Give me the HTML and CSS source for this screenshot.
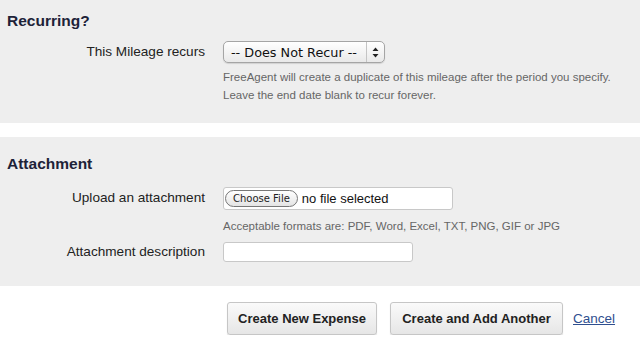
FILE: index.html
```html
<!DOCTYPE html>
<html>
<head>
<meta charset="utf-8">
<link rel="stylesheet" href="styles.css">
</head>
<body>
<section class="panel panel-recur">
  <h2 class="panel-title">Recurring?</h2>
  <div class="row">
    <label class="row-label">This Mileage recurs</label>
    <div class="row-field">
      <div class="select">
        <span class="select-text">-- Does Not Recur --</span>
        <span class="select-arrows">
          <svg width="7" height="11" viewBox="0 0 7 11"><path d="M3.5 0.5 L6.5 4 L0.5 4 Z M3.5 10.5 L6.5 7 L0.5 7 Z" fill="#222"/></svg>
        </span>
      </div>
      <p class="help help-recur">FreeAgent will create a duplicate of this mileage after the period you specify.<br>Leave the end date blank to recur forever.</p>
    </div>
  </div>
</section>
<section class="panel panel-attach">
  <h2 class="panel-title panel-title-attach">Attachment</h2>
  <div class="row">
    <label class="row-label">Upload an attachment</label>
    <div class="row-field">
      <div class="file-input">
        <span class="file-button">Choose File</span>
        <span class="file-name">no file selected</span>
      </div>
      <p class="help help-attach">Acceptable formats are: PDF, Word, Excel, TXT, PNG, GIF or JPG</p>
    </div>
  </div>
  <div class="row">
    <label class="row-label row-label-desc">Attachment description</label>
    <div class="row-field">
      <div class="text-input"></div>
    </div>
  </div>
</section>
<div class="actions">
  <button class="btn btn-create">Create New Expense</button>
  <button class="btn btn-another">Create and Add Another</button>
  <a class="cancel" href="#">Cancel</a>
</div>
</body>
</html>
```

FILE: styles.css
```css
html, body {
  margin: 0;
  padding: 0;
  background: #ffffff;
  font-family: "Liberation Sans", Arial, sans-serif;
  color: #222222;
}

.panel {
  background: #eeeeee;
  padding: 0 7px;
}

.panel-recur {
  padding-top: 11px;
  padding-bottom: 19px;
}

.panel-attach {
  margin-top: 14px;
  padding-top: 17px;
  padding-bottom: 24px;
}

.panel-title {
  margin: 0 0 10px 0;
  font-size: 15.5px;
  line-height: 20px;
  font-weight: bold;
  color: #1d2238;
}

.panel-title-attach {
  margin-bottom: 13px;
}

.row {
  display: grid;
  grid-template-columns: 198px 1fr;
  column-gap: 18px;
}

.row-label {
  text-align: right;
  font-size: 13.6px;
  line-height: 22px;
  color: #222222;
}

.row-field {
  display: flex;
  flex-direction: column;
  align-items: flex-start;
}

.select {
  width: 160px;
  height: 20px;
  border: 1px solid #a5a5a5;
  border-radius: 5px;
  background: linear-gradient(#ffffff, #e9e9e9);
  box-shadow: 0 1px 1px rgba(0,0,0,0.12);
  display: flex;
  align-items: center;
  font-family: "DejaVu Sans", sans-serif;
  font-size: 12.8px;
  color: #111111;
}

.select-text {
  flex: 1;
  min-width: 0;
  padding-left: 7px;
  white-space: nowrap;
  overflow: hidden;
}

.select-arrows {
  flex: none;
  width: 17px;
  height: 20px;
  border-left: 1px solid #c4c4c4;
  display: flex;
  align-items: center;
  justify-content: center;
}

.help {
  margin: 0;
  font-size: 11.5px;
  color: #666666;
}

.help-recur {
  margin-top: 5px;
  line-height: 18px;
}

.help-attach {
  margin-top: 8px;
  margin-bottom: 8px;
  line-height: 16px;
}

.file-input {
  width: 228px;
  height: 21px;
  border: 1px solid #c8c8c8;
  border-radius: 3px;
  background: #ffffff;
  display: flex;
  align-items: center;
}

.file-button {
  margin-left: 1px;
  height: 15px;
  padding: 0 7px;
  border: 1px solid #777777;
  border-radius: 9px;
  background: linear-gradient(#ffffff, #e4e4e4);
  font-family: "DejaVu Sans", sans-serif;
  font-size: 10px;
  line-height: 15px;
  color: #222222;
}

.file-name {
  margin-left: 4px;
  font-size: 13px;
  color: #111111;
}

.text-input {
  width: 188px;
  height: 18px;
  border: 1px solid #c8c8c8;
  border-radius: 3px;
  background: #ffffff;
}

.row-label-desc {
  line-height: 20px;
}

.actions {
  display: flex;
  align-items: center;
  gap: 13px;
  padding: 16px 0 0 227px;
}

.btn {
  height: 33px;
  padding: 0 10px;
  border: 1px solid #c6c6c6;
  border-radius: 3px;
  background: linear-gradient(#fafafa, #e6e6e6);
  box-shadow: 0 1px 1px rgba(0,0,0,0.15);
  font-family: "Liberation Sans", Arial, sans-serif;
  font-size: 13px;
  font-weight: bold;
  color: #222222;
}

.btn-create { width: 150px; }
.btn-another { width: 173px; }

.cancel {
  margin-left: -3px;
  font-size: 13.5px;
  color: #2f4f8f;
  text-decoration: underline;
}
```
